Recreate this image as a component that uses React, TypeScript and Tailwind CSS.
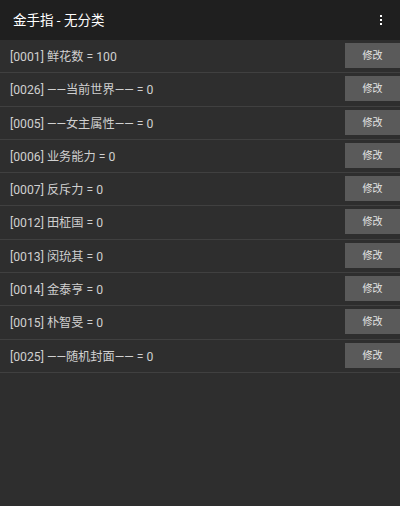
const font = { fontFamily: 'Roboto, "Noto Sans CJK SC", sans-serif' };

const cheats = [
  { id: '0001', name: '鲜花数', value: '100' },
  { id: '0026', name: '——当前世界——', value: '0' },
  { id: '0005', name: '——女主属性——', value: '0' },
  { id: '0006', name: '业务能力', value: '0' },
  { id: '0007', name: '反斥力', value: '0' },
  { id: '0012', name: '田柾国', value: '0' },
  { id: '0013', name: '闵玧其', value: '0' },
  { id: '0014', name: '金泰亨', value: '0' },
  { id: '0015', name: '朴智旻', value: '0' },
  { id: '0025', name: '——随机封面——', value: '0' },
];

function MenuDots() {
  return (
    <div className="flex flex-col gap-[1.5px] px-2 py-1">
      <span className="block w-[2.5px] h-[2.5px] bg-white" />
      <span className="block w-[2.5px] h-[2.5px] bg-white" />
      <span className="block w-[2.5px] h-[2.5px] bg-white" />
    </div>
  );
}

export default function App() {
  return (
    <div className="w-[400px] h-[506px] bg-[#2e2e2e] flex flex-col" style={font}>
      {/* Toolbar */}
      <div className="h-[40px] bg-[#1f1f1f] flex items-center justify-between pl-[13px] pr-[10px]">
        <h1 className="text-[13.5px] font-normal text-white">金手指 - 无分类</h1>
        <MenuDots />
      </div>

      {/* Cheat list */}
      <ul>
        {cheats.map((c) => (
          <li
            key={c.id}
            className="h-[33.3px] border-b border-[#404040] flex items-start justify-between"
          >
            <span className="pl-[10px] pt-[8px] text-[12.2px] text-[#d0d0d0]">
              [{c.id}] {c.name} = {c.value}
            </span>
            <button className="mt-[3px] w-[55px] h-[25px] bg-[#5a5a5a] text-[10px] text-[#e4e4e4] flex items-center justify-center">
              修改
            </button>
          </li>
        ))}
      </ul>
    </div>
  );
}
